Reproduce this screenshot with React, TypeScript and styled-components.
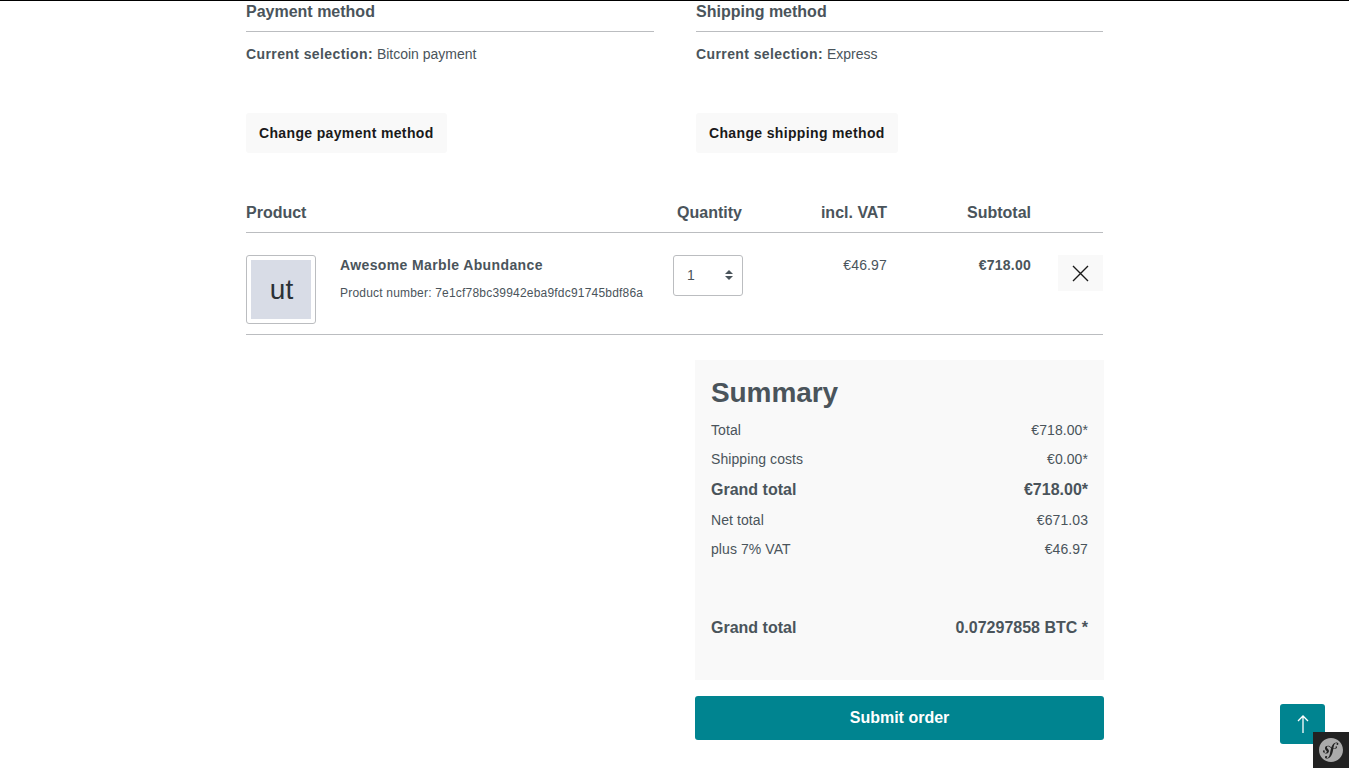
import React from "react";
import styled, { createGlobalStyle } from "styled-components";
import { SiSymfony } from "react-icons/si";

const Global = createGlobalStyle`
  html, body { margin: 0; padding: 0; background: #fff; }
  body { font-family: "Liberation Sans", Arial, sans-serif; color: #4a545b; overflow: hidden; }
`;

const Page = styled.div`
  width: 1349px;
  height: 768px;
  border-top: 1px solid #000;
  box-sizing: border-box;
  overflow: hidden;
`;
const Container = styled.main`
  width: 857px;
  margin-left: 246px;
`;
const Methods = styled.section`
  display: grid;
  grid-template-columns: 408px 407px;
  column-gap: 42px;
`;
const MethodHeading = styled.h3`
  margin: 0;
  height: 31px;
  padding-top: 1px;
  box-sizing: border-box;
  font-size: 16px;
  line-height: 20px;
  font-weight: 700;
  border-bottom: 1px solid #bbbdc0;
`;
const Selection = styled.p`
  margin: 13px 0 0;
  font-size: 14px;
  line-height: 18px;
  height: 68px;
  b { font-weight: 700; letter-spacing: 0.4px; }
`;
const GhostButton = styled.button`
  display: block;
  height: 40px;
  padding: 0 13px;
  border: 0;
  border-radius: 3px;
  background: #f9f9f9;
  color: #1a1a1a;
  font: 700 14px/40px "Liberation Sans", Arial, sans-serif;
  letter-spacing: 0.35px;
`;
const TableHead = styled.div`
  display: flex;
  margin-top: 50px;
  height: 29px;
  border-bottom: 1px solid #bbbdc0;
  font-size: 16px;
  line-height: 20px;
  font-weight: 700;
`;
const HeadCell = styled.div<{ $w: number; $right?: boolean }>`
  width: ${(p) => p.$w}px;
  text-align: ${(p) => (p.$right ? "right" : "left")};
`;
const ProductRow = styled.div`
  display: flex;
  height: 79px;
  padding-top: 22px;
  border-bottom: 1px solid #bbbdc0;
`;
const Thumb = styled.div`
  width: 70px;
  height: 69px;
  box-sizing: border-box;
  padding: 4px;
  border: 1px solid #bbbdc0;
  border-radius: 3px;
  flex: none;
`;
const ThumbInner = styled.div`
  height: 100%;
  padding-left: 1px;
  box-sizing: border-box;
  background: #d8dce6;
  color: #2b3136;
  font-size: 28px;
  display: flex;
  align-items: center;
  justify-content: center;
`;
const ProductInfo = styled.div`
  width: 333px;
  margin-left: 24px;
  flex: none;
`;
const ProductName = styled.div`
  font-size: 14px;
  line-height: 20px;
  font-weight: 700;
  letter-spacing: 0.38px;
`;
const ProductNumber = styled.div`
  margin-top: 10px;
  font-size: 12px;
  line-height: 16px;
  letter-spacing: 0.2px;
  white-space: nowrap;
`;
const Qty = styled.div`
  width: 70px;
  height: 41px;
  flex: none;
  box-sizing: border-box;
  border: 1px solid #bbbdc0;
  border-radius: 3px;
  padding: 0 9px 1px 13px;
  display: flex;
  align-items: center;
  justify-content: space-between;
  font-size: 14px;
  svg { display: block; }
`;
const Price = styled.div<{ $w: number; $bold?: boolean }>`
  width: ${(p) => p.$w}px;
  flex: none;
  text-align: right;
  font-size: 14px;
  line-height: 20px;
  font-weight: ${(p) => (p.$bold ? 700 : 400)};
  letter-spacing: ${(p) => (p.$bold ? 0.25 : 0.15)}px;
`;
const RemoveButton = styled.button`
  width: 45px;
  height: 36px;
  margin-left: 27px;
  padding: 0;
  flex: none;
  border: 0;
  background: #f9f9f9;
  display: flex;
  align-items: center;
  justify-content: center;
  color: #1a1a1a;
`;
const SummaryColumn = styled.aside`
  width: 409px;
  margin: 25px 0 0 449px;
`;
const SummaryBox = styled.div`
  height: 320px;
  box-sizing: border-box;
  padding: 15px 16px 0;
  background: #f9f9f9;
`;
const SummaryTitle = styled.h2`
  margin: 0 0 5px;
  font-size: 28px;
  line-height: 36px;
  font-weight: 700;
  letter-spacing: -0.1px;
`;
const Line = styled.div<{ $bold?: boolean; $top?: number }>`
  display: flex;
  justify-content: space-between;
  margin-top: ${(p) => p.$top ?? 0}px;
  font-size: ${(p) => (p.$bold ? 16 : 14)}px;
  font-weight: ${(p) => (p.$bold ? 700 : 400)};
  line-height: ${(p) => (p.$bold ? 32 : 29)}px;
  letter-spacing: ${(p) => (p.$bold ? 0 : 0.08)}px;
`;
const SubmitButton = styled.button`
  display: block;
  width: 100%;
  height: 44px;
  margin-top: 16px;
  padding: 0;
  border: 0;
  border-radius: 3px;
  background: #008490;
  color: #fff;
  font: 700 16px/42px "Liberation Sans", Arial, sans-serif;
`;
const ScrollTop = styled.button`
  position: fixed;
  left: 1280px;
  top: 704px;
  width: 45px;
  height: 40px;
  padding: 0;
  border: 0;
  border-radius: 3px;
  background: #008490;
  color: #fff;
  display: flex;
  align-items: center;
  justify-content: center;
`;
const ToolbarBadge = styled.div`
  position: fixed;
  left: 1313px;
  top: 732px;
  width: 36px;
  height: 36px;
  background: #222;
  color: #aaa;
  display: flex;
  align-items: center;
  justify-content: center;
`;

export default function App() {
  return (
    <Page>
      <Global />
      <Container>
        <Methods>
          <div>
            <MethodHeading>Payment method</MethodHeading>
            <Selection><b>Current selection:</b> Bitcoin payment</Selection>
            <GhostButton>Change payment method</GhostButton>
          </div>
          <div>
            <MethodHeading>Shipping method</MethodHeading>
            <Selection><b>Current selection:</b> Express</Selection>
            <GhostButton>Change shipping method</GhostButton>
          </div>
        </Methods>
        <TableHead>
          <HeadCell $w={427}>Product</HeadCell>
          <HeadCell $w={69} $right>Quantity</HeadCell>
          <HeadCell $w={145} $right>incl. VAT</HeadCell>
          <HeadCell $w={144} $right>Subtotal</HeadCell>
        </TableHead>
        <ProductRow>
          <Thumb><ThumbInner>ut</ThumbInner></Thumb>
          <ProductInfo>
            <ProductName>Awesome Marble Abundance</ProductName>
            <ProductNumber>Product number: 7e1cf78bc39942eba9fdc91745bdf86a</ProductNumber>
          </ProductInfo>
          <Qty>
            <span>1</span>
            <svg width="8" height="10" viewBox="0 0 8 10" fill="#4a545b">
              <path d="M4 0 8 4H0zM0 6h8l-4 4z" />
            </svg>
          </Qty>
          <Price $w={144}>€46.97</Price>
          <Price $w={144} $bold>€718.00</Price>
          <RemoveButton aria-label="Remove">
            <svg width="17" height="17" viewBox="0 0 17 17" stroke="currentColor" strokeWidth="1.4" fill="none">
              <path d="M1 1l15 15M16 1 1 16" />
            </svg>
          </RemoveButton>
        </ProductRow>
        <SummaryColumn>
          <SummaryBox>
            <SummaryTitle>Summary</SummaryTitle>
            <Line><span>Total</span><span>€718.00*</span></Line>
            <Line><span>Shipping costs</span><span>€0.00*</span></Line>
            <Line $bold><span>Grand total</span><span>€718.00*</span></Line>
            <Line><span>Net total</span><span>€671.03</span></Line>
            <Line><span>plus 7% VAT</span><span>€46.97</span></Line>
            <Line $bold $top={48}><span>Grand total</span><span>0.07297858 BTC *</span></Line>
          </SummaryBox>
          <SubmitButton>Submit order</SubmitButton>
        </SummaryColumn>
      </Container>
      <ScrollTop aria-label="Back to top">
        <svg width="12" height="20" viewBox="0 0 12 20" stroke="currentColor" strokeWidth="1.3" fill="none">
          <path d="M6 19V2M1 7l5-5 5 5" />
        </svg>
      </ScrollTop>
      <ToolbarBadge>
        <SiSymfony size={24} />
      </ToolbarBadge>
    </Page>
  );
}
